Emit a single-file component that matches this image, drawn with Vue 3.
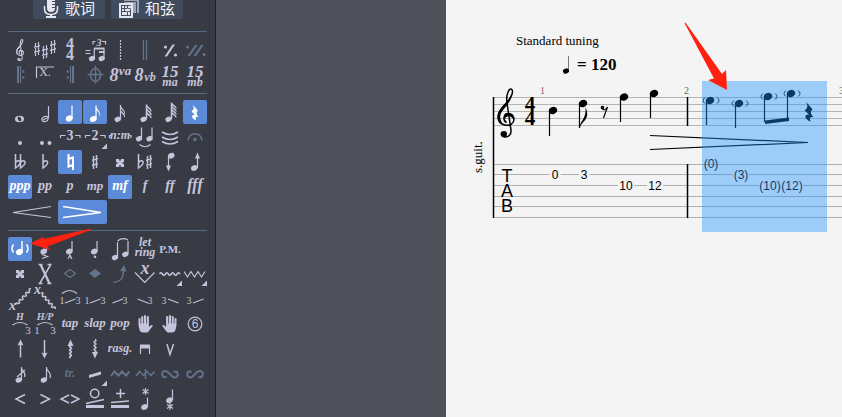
<script setup>
import { ref } from "vue";

// note head, centred on x / y
const head = (x, y, r = 3.1) => {
  const dx = r * 0.9;
  const dy = r * 0.42;
  return `M${x - dx} ${y + dy}a${r} ${r * 0.74} -25 1 1 ${dx * 2} ${-dy * 2}a${r} ${r * 0.74} -25 1 1 ${-dx * 2} ${dy * 2}z`;
};

const dot = (x, y, r = 1.5) => `M${x - r} ${y}a${r} ${r} 0 1 1 ${r * 2} 0a${r} ${r} 0 1 1 ${-r * 2} 0z`;

const sharp = (x, y) =>
  `M${x - 1.5} ${y - 6}v13M${x + 1.5} ${y - 7}v13M${x - 3} ${y - 1.6}l6 -1.8M${x - 3} ${y + 3.4}l6 -1.8`;

const flat = (x, y) => `M${x} ${y - 9}v14c3 -2 5 -4 4.6 -6c-0.6 -2 -3 -1.4 -4.6 0.4`;

// four arms, thicker towards the corners
const cross = (x, y) =>
  `M${x - 4} ${y - 4}h3l1 2.500l1 -2.500h3v3l-2.500 1l2.500 1v3h-3l-1 -2.500l-1 2.500h-3v-3l2.500 -1l-2.500 -1z`;

// wavy line between two points
const wave = (x1, y1, x2, y2, n, a) => {
  const len = Math.hypot(x2 - x1, y2 - y1);
  const px = (-(y2 - y1) / len) * a;
  const py = ((x2 - x1) / len) * a;
  let d = `M${x1} ${y1}`;
  for (let i = 0; i < n; i++) {
    const s = i % 2 ? 1 : -1;
    const mx = x1 + ((x2 - x1) * (i + 0.5)) / n + px * s;
    const my = y1 + ((y2 - y1) * (i + 0.5)) / n + py * s;
    d += `Q${mx} ${my} ${x1 + ((x2 - x1) * (i + 1)) / n} ${y1 + ((y2 - y1) * (i + 1)) / n}`;
  }
  return d;
};

const clef =
  "M9.5 34.5C5.5 32.5 6.5 25.5 11 25.5C17.5 25.5 18.5 33 14.5 36C9.500 39 1.500 36.500 1 30C0.500 24 5 20 8.500 16C12 12 15.500 8 15.500 3.500C15.500 0.500 13 0 11.500 3C9 8 9.500 12 10 15L14 42C14.500 47 11 49.500 7.500 49C4.500 48.500 3.500 46 5 44";
const clefFill =
  "M15.500 6C14 11 8 15 4 20C-1 26 0 33 6 36C3 32 2 28 5 23.500C8 19 14 14 15.500 6zM7 29.500C7.500 26 10 24.500 13 25.500C17 26.500 18.500 31 16 34.500C17 31 15 28.500 12 28.200C10 28 8.500 29 8.200 31zM4 46a3 3 0 1 1 6 0a3 3 0 1 1 -6 0z";

const quarterRest =
  "M9.500 4.500L14.800 10.500C13 12.500 13 14 15.800 17C13.500 16.200 11.500 17.500 13.500 20.500C8 18.500 7.800 14.500 12 14.800L8.500 11.500C11.500 9 11 7.500 9.500 4.500z";
const hand =
  "M5.500 13.500v-7q1 -1.200 2 0v5h.7v-7q1 -1.200 2.100 0v7h.7v-7.800q1 -1.200 2.100 0v7.800h.7v-7q1 -1.200 2.100 0v10.500l2 -1.800q1.500 -.8 2.100 .4l-4 5.400q-1 1.500 -2.500 1.500h-3.500q-2.500 0 -3.300 -2z";
const corner = "M24 18.500v5.500h-5.500z";
const turn = "M8.500 14.500C4 17.500 2 9.500 7 9C11.500 8.500 12.500 15.800 17 15.500C21.500 15 20.500 7.500 15.500 10";

// d: stroked path, f: filled path, t: texts as [x, baseline, size, string]
const groups = ref([
  [
    { name: "Clef", clef: true },
    { name: "Key signature", d: sharp(4, 11) + sharp(12, 14) + sharp(20, 9) },
    { name: "Time signature", t: [[12, 11, 16, "4"], [12, 22, 16, "4"]], face: "bold" },
    { name: "Tuplet feel", d: "M2.500 12.500h5M2.500 15.500h5M10 6.500v-3h2.500M19 3.500h3.500v3M11.300 20v-9.500M21 20v-9.500", f: head(9, 20.5) + head(18.7, 20.5) + "M11 9.500h10.500v2h-10.500zM16 13h5.500v2h-5.500z", t: [[16, 8, 10, "3"]] },
    { name: "Free barline", d: "M12.500 2v20", dashed: true },
    { name: "Double barline", d: "M10.500 2v20M13.500 2v20", dim: true },
    { name: "Simile mark", f: dot(7.5, 9, 1.6) + dot(17.5, 17, 1.6) + "M6.500 18.500l8 -12h2.500l-8 12z" },
    { name: "Double simile mark", f: dot(4.5, 9, 1.5) + dot(21, 16.5, 1.5) + "M4.500 18l7.500 -11h2.500l-7.500 11zM10.500 18l7.500 -11h2.500l-7.500 11z", dim: true },
    { name: "Repeat open", d: "M12.500 3v17", f: "M9 3h2v17h-2z" + dot(15.3, 8.5, 1.2) + dot(15.3, 14.5, 1.2), dim: true },
    { name: "Alternate ending", d: "M3.500 15v-11h17.500", t: [[12, 13, 12, "X."]], face: "plain" },
    { name: "Repeat close", d: "M12.500 3v17", f: "M14 3h2v17h-2z" + dot(9.7, 8.5, 1.2) + dot(9.7, 14.5, 1.2), dim: true },
    { name: "Coda", d: "M7.500 12a5 6.500 0 1 1 10 0a5 6.500 0 1 1 -10 0zM12.500 2.500v18M4.500 11.500h16", dim: true, semi: true },
    { name: "Ottava alta", t: [[6, 18, 18, "8"], [17, 12, 13, "va"]] },
    { name: "Ottava bassa", t: [[6, 18, 18, "8"], [17, 18, 12, "vb"]] },
    { name: "Quindicesima alta", t: [[12, 14, 17, "15"], [12, 23, 12, "ma"]] },
    { name: "Quindicesima bassa", t: [[12, 14, 17, "15"], [12, 23, 12, "mb"]] },
  ],
  [
    { name: "Whole", f: "M7 19a4.500 3.300 0 1 1 9 0a4.500 3.300 0 1 1 -9 0zM9.700 18.500a1.500 2.300 -25 1 0 3.600 1a1.500 2.300 -25 1 0 -3.600 -1z", cut: true },
    { name: "Half", d: "M15.500 18v-12" + head(12, 19, 3.1) + "M10 20l4 -2" },
    { name: "Quarter", d: "M14 18.500v-13", f: head(11.3, 18.5, 3.6), on: true },
    { name: "Eighth", d: "M13 18.500v-13", f: head(10.3, 19, 3.5) + "M13 5.500c0 4 5.500 5.500 4 12c0 -4 -2 -6.500 -4 -7.500z", on: true },
    { name: "Sixteenth", d: "M12.500 19v-14M12.500 6c0 3 5 4 4 8M12.500 10c0 3 5 4 4 7", f: head(9.7, 19.3) },
    { name: "Thirty-second", d: "M13.500 19v-14.500M13.500 5c0 2.500 5 3.500 4.500 6.500M13.500 8.500c0 2.500 5 3.500 4.500 6.500M13.500 12c0 2.500 5 3.500 4.500 6", f: head(10.5, 19.3), semi: true },
    { name: "Sixty-fourth", d: "M13.500 19v-16.500M13.500 3c0 2 5 3.500 4.500 5.500M13.500 6c0 2 5 3.500 4.500 5.500M13.500 9c0 2 5 3.500 4.500 5.500M13.500 12c0 2 5 3.500 4.500 5.500", f: head(10.5, 19.3), semi: true },
    { name: "Rest", f: quarterRest, on: true },
    { name: "Dotted", f: dot(12, 18, 2) },
    { name: "Double dotted", f: dot(9, 18, 2) + dot(16.5, 18, 2) },
    { name: "Triplet", d: "M2.500 13v-2.500h5M17 10.500h5v2.500", t: [[12, 15, 14, "3"]], face: "bold" },
    { name: "Tuplet", d: "M2.500 13v-2.500h5M17 10.500h5v2.500", f: corner, t: [[12, 15, 14, "2"]], face: "bold" },
    { name: "Custom tuplet", d: "M1.500 13v-2.500h1.500M21.500 10.500h1.500v2.500", t: [[12, 14, 12, "n:m"]] },
    { name: "Tie", d: "M8.500 13.500v-11M19 13.500v-11M6.500 19.500q5.500 4.500 11 0", f: head(6, 13.7) + head(16.5, 13.7) },
    { name: "Tie beat", d: "M4 7q8 5 16 0M4 12q8 5 16 0M4 16.500q8 5 16 0", semi: true },
    { name: "Fermata", d: "M5 15.500c1 -9 13 -9 14 0", f: dot(12, 14.5, 1.8), dim: true, semi: true },
    { name: "Double flat", d: flat(7.5, 13) + flat(12.5, 13), semi: true },
    { name: "Flat", d: flat(10, 13), semi: true },
    { name: "Natural", d: "M10.500 4v12.500l4.500 -1.500M15 20v-12.500l-4.500 1.500", on: true, bold: true },
    { name: "Sharp", d: sharp(12, 12), semi: true },
    { name: "Double sharp", f: cross(12, 13) },
    { name: "Enharmonic", d: flat(5.5, 13) + sharp(16, 12), semi: true },
    { name: "Step down", d: "M10.500 6v13", f: head(13.2, 5.7, 3.4) + "M8 15.500h5l-2.500 6z" },
    { name: "Step up", d: "M14.500 18v-13", f: head(11.3, 18, 3.4) + "M12 8.500h5l-2.500 -6z" },
    { name: "Pianississimo", t: [[12, 15, 14, "ppp"]], on: true },
    { name: "Pianissimo", t: [[12, 15, 14, "pp"]], face: "italic" },
    { name: "Piano", t: [[12, 15, 14, "p"]], face: "bolditalic" },
    { name: "Mezzo piano", t: [[12, 15, 13, "mp"]], face: "italic" },
    { name: "Mezzo forte", t: [[12, 15, 14, "mf"]], on: true },
    { name: "Forte", t: [[12, 15, 14, "f"]], face: "bolditalic" },
    { name: "Fortissimo", t: [[12, 15, 15, "ff"]], face: "bolditalic" },
    { name: "Fortississimo", t: [[12, 15, 16, "fff"]], face: "bolditalic" },
    { name: "Crescendo", d: "M43 6.500L5 12.500L43 17.500", wide: true },
    { name: "Decrescendo", d: "M5 6.500L43 12.500L5 17.500", wide: true, on: true, semi: true },
  ],
  [
    { name: "Ghost note", d: "M14 15v-11M5.500 7.500q-3 4 0 8M18.500 7.500q3 4 0 8", f: head(11.5, 15, 3.6), on: true, semi: true },
    { name: "Accent", d: "M13.500 14v-9.500M9 17.500l5.500 2l-5.500 2", f: head(10.7, 14.5, 3.4) },
    { name: "Heavy accent", d: "M14 14v-10", f: head(11.3, 14.5, 3.4) + "M9.500 22l2 -4.500h1l2 4.500h-1.500l-1.200 -2.500l-1.200 2.500z" },
    { name: "Staccato", d: "M14 14v-10", f: head(11.3, 14.5, 3.4) + dot(12, 19.7, 1.3) },
    { name: "Legato", d: "M9.500 20v-15M20 17v-13M9.500 4q5 -4 10.500 -1", f: head(7, 20.5) + head(17.3, 17.3) },
    { name: "Let ring", t: [[12, 9, 12, "let"], [12, 19, 12, "ring"]] },
    { name: "Palm mute", t: [[12, 16, 11, "P.M."]], face: "bold" },
    { name: "", gap: true },
    { name: "Dead note", f: cross(12, 12) },
    { name: "Dead slap", d: "M7 21L17.500 3M5.500 2.500h4M14.500 2.500h4M5.500 21.500h4M14.500 21.500h4", f: "M6.500 3h2.500l8.500 18h-2.500z", semi: true },
    { name: "Natural harmonic", d: "M6.500 11.500l5.500 -4l5.500 4l-5.500 4z", dim: true },
    { name: "Artificial harmonic", f: "M6 11.500l6 -4.500l6 4.500l-6 4.500z", dim: true },
    { name: "Bend", d: "M5.500 20.500c7 -1 10 -4 10 -12", f: "M12 9l4 -6l2.500 6.500z", dim: true, semi: true },
    { name: "Whammy bar", d: "M2 10.500l9.700 10l9.800 -10", t: [[12, 12, 18, "x"]] },
    { name: "Vibrato", d: wave(1.5, 12, 22, 12, 7, 2.5), f: corner, semi: true },
    { name: "Wide vibrato", d: "M1 9.500l3.500 5.500l3.500 -5.500l3.500 5.500l3.500 -5.500l3.500 5.500l3.500 -5.500", f: corner },
    { name: "Slide from below", d: wave(8, 18, 23, 2, 9, 2.5), t: [[4.5, 23, 14, "x"]], semi: true },
    { name: "Slide from above", d: wave(8, 6, 22, 22, 9, 2.5), t: [[4.5, 7, 14, "x"]], semi: true },
    { name: "Legato slide", d: "M7 16l10.500 -4M4 6.500q7.500 -6 15 0", t: [[4, 17, 10, "1"], [20, 17, 10, "3"]], face: "plain" },
    { name: "Shift slide", d: "M7 16l10.500 -4", t: [[4, 17, 10, "1"], [20, 17, 10, "3"]], face: "plain" },
    { name: "Slide in from below", d: "M4.500 16l10.500 -4", t: [[17, 17, 10, "3"]], face: "plain" },
    { name: "Slide in from above", d: "M4.500 12l10.500 4", t: [[17, 17, 10, "3"]], face: "plain" },
    { name: "Slide out downwards", d: "M10 12l10.500 4", t: [[6, 17, 10, "3"]], face: "plain" },
    { name: "Slide out upwards", d: "M10 16l10.500 -4", t: [[6, 17, 10, "3"]], face: "plain" },
    { name: "Hammer-on", d: "M4.500 13q7.500 -5 15 0", t: [[12, 8, 10, "H"], [20, 22, 11, "3"]], mixed: true },
    { name: "Hammer-on / pull-off", d: "M4.500 13q7.500 -5 15 0", t: [[12, 8, 10, "H/P"], [4, 22, 11, "1"], [20, 22, 11, "3"]], mixed: true },
    { name: "Tapping", t: [[12, 15, 13, "tap"]] },
    { name: "Slap", t: [[12, 15, 13, "slap"]] },
    { name: "Pop", t: [[12, 15, 13, "pop"]] },
    { name: "Left hand fingering", f: hand },
    { name: "Right hand fingering", f: hand, flip: true },
    { name: "String number", d: dot(12, 12, 6.8), t: [[12, 16, 12, "6"]], face: "sans" },
    { name: "Arpeggio up", d: "M12.500 20.500v-14", f: "M9.500 8.500l3 -6l3 6q-3 -1.500 -6 0z", semi: true },
    { name: "Arpeggio down", d: "M11.500 3v14", f: "M8.500 15.500l3 6l3 -6q-3 1.500 -6 0z", semi: true },
    { name: "Brush up", d: wave(12.5, 21, 12.5, 7, 8, 2), f: "M9.500 9l3 -6.500l3 6.500z", semi: true },
    { name: "Brush down", d: wave(12, 2.5, 12, 17, 8, 2), f: "M9 15l3 6.500l3 -6.500z", semi: true },
    { name: "Rasgueado", t: [[12, 15, 12, "rasg."]] },
    { name: "Downstroke", d: "M7.500 17v-8M16.500 17v-8", f: "M7 7.500h10v4h-10z" },
    { name: "Upstroke", d: "M9 7l3 10.500l3.500 -10.500", semi: true },
    { name: "", gap: true },
    { name: "Grace note before beat", d: "M13.500 18v-13M13.500 6c0 3 5 4 3 9M9 15l8 -7", f: head(10.7, 18) },
    { name: "Grace note on beat", d: "M13.500 18v-13M13.500 6c0 3 5.500 4 3.500 10", f: head(10.8, 18) },
    { name: "Trill", t: [[12, 15, 12, "tr."]], dim: true },
    { name: "Tremolo picking", f: "M6 13l12 -3.500v3l-12 3.500z" + corner },
    { name: "Upper mordent", d: "M3 14l3.500 -4.500l4 4l3.500 -4l4 4l3.500 -4", dim: true, bold: true },
    { name: "Lower mordent", d: "M3 14l3.500 -4.500l4 4l3.500 -4l4 4l3.500 -4M12.500 7v10", dim: true, semi: true },
    { name: "Turn", d: turn, dim: true, bold: true },
    { name: "Inverted turn", d: turn, dim: true, bold: true, flip: true },
    { name: "Fade in", d: "M17 7.500l-9 4.500l9 4.500", semi: true },
    { name: "Fade out", d: "M7.500 7.500l9 4.500l-9 4.500", semi: true },
    { name: "Volume swell", d: "M11 8l-8 4l8 4M13 8l8 4l-8 4", semi: true },
    { name: "Wah open", d: dot(11.7, 6.5, 4.2) + "M3 16.500l18 -4", f: "M3 18h18v3h-18z", semi: true },
    { name: "Wah close", d: "M12.500 2v9M8 6.500h9M3 15.500l18 -1.500", f: "M3 18h18v3h-18z", semi: true },
    { name: "Pick scrape", d: "M12.500 1v7M9.500 2.500l6 4M15.500 2.500l-6 4M14.500 20v-9.500", f: head(11.5, 20, 3.4) },
    { name: "Golpe", d: "M14.500 13v-10.500M12 16v7M9 17.500l6 4M15 17.500l-6 4", f: head(11.5, 13.3, 3.4) },
  ],
]);

const toggle = (cell) => {
  cell.on = !cell.on;
};

const face = (cell, i) => {
  if (cell.mixed) return i ? "plain" : "bolditalic";
  return cell.face || "bolditalic";
};

const staffLines = [97.5, 104.5, 111.5, 118.5, 125.5];
const tabLines = [164.5, 174.5, 185.5, 196.5, 206.5, 217.5];

const notes = [
  { x: 553, y: 110.5, end: 136 },
  { x: 583, y: 103.5, end: 128 },
  { x: 624, y: 97, end: 122 },
  { x: 654, y: 93.5, end: 118 },
  { x: 710, y: 100.5, end: 125, ghost: true },
  { x: 739, y: 103.5, end: 128, ghost: true },
  { x: 768, y: 96.5, end: 122, ghost: true },
  { x: 791, y: 93.5, end: 119, ghost: true },
];

const frets = [
  { x: 555, y: 179, w: 11, text: "0" },
  { x: 584, y: 179, w: 11, text: "3" },
  { x: 626, y: 190, w: 16, text: "10" },
  { x: 655, y: 190, w: 16, text: "12" },
  { x: 711, y: 168, w: 0, text: "(0)" },
  { x: 741, y: 179, w: 16, text: "(3)" },
  { x: 770, y: 190, w: 22, text: "(10)" },
  { x: 792, y: 190, w: 22, text: "(12)" },
];
</script>

<template>
  <div class="editor">
    <aside class="palette">
      <div class="tabs">
        <button type="button" class="tab">
          <svg width="16" height="19" viewBox="0 0 16 19">
            <path class="fill" d="M4 0h8v8q0 4 -4 4t-4 -4zM7 14h2v2h4v2h-10v-2h4z" />
            <path class="line semi" d="M1.500 6v3q0 5.500 6.500 5.500t6.500 -5.500v-3" />
            <path class="groove" d="M9 1.500h3M9 4.500h3M9 7.500h3" />
          </svg>
          <span>歌词</span>
        </button>
        <button type="button" class="tab chords">
          <svg width="20" height="19" viewBox="0 0 20 19">
            <path class="fill back" d="M5 0h15v13h-15z" />
            <path class="groove" d="M3 1.500h14.500v13" />
            <path class="fill" d="M0 3h14v15h-14z" />
            <path class="groove" d="M2.500 5v11M5.500 5v11M8.500 5v11M11.500 5v11M2 5.500h10M2 8.500h10M2 11.500h10M2 15.500h10" />
            <path class="fill" :d="dot(5.5, 13.5, 1.5) + dot(8.5, 10, 1.5) + dot(11.5, 7, 1.5)" />
          </svg>
          <span>和弦</span>
        </button>
      </div>

      <template v-for="(group, g) in groups" :key="g">
        <hr class="rule" />
        <div class="cells">
          <template v-for="(cell, c) in group" :key="c">
            <span v-if="cell.gap"></span>
            <button
              v-else
              type="button"
              class="cell"
              :class="{ on: cell.on, dim: cell.dim, wide: cell.wide }"
              :aria-label="cell.name"
              :aria-pressed="!!cell.on"
              @click="toggle(cell)"
            >
              <svg :width="cell.wide ? 49 : 24" height="24" :viewBox="cell.wide ? '0 0 49 24' : '0 0 24 24'">
                <g v-if="cell.clef" transform="translate(8 1) scale(0.44)">
                  <path class="line clef-line" :d="clef" />
                  <path class="fill" :d="clefFill" />
                </g>
                <g :transform="cell.flip ? 'translate(24 0) scale(-1 1)' : null">
                  <path
                    v-if="cell.d"
                    class="line"
                    :class="{ bold: cell.bold, semi: cell.semi, dashed: cell.dashed }"
                    :d="cell.d"
                  />
                  <path v-if="cell.f" class="fill" :class="{ cut: cell.cut }" :d="cell.f" />
                </g>
                <text
                  v-for="(t, i) in cell.t"
                  :key="i"
                  :class="face(cell, i)"
                  :x="t[0]"
                  :y="t[1]"
                  :font-size="t[2]"
                  text-anchor="middle"
                >{{ t[3] }}</text>
              </svg>
            </button>
          </template>
        </div>
      </template>

      <svg class="pointer" width="64" height="24" viewBox="29 226 64 24">
        <path d="M30 243.500L44.500 236.500L43.500 239L89 229Q92 229 90.500 230L47.500 246.500L50.500 250z" />
      </svg>
    </aside>

    <div class="desk"></div>

    <main class="sheet">
      <svg class="score" width="396" height="417" viewBox="446 0 396 417">
        <text class="serif" x="516" y="45" font-size="13">Standard tuning</text>
        <path class="tempo-stem" d="M568.500 71v-15" />
        <path :d="head(566, 71, 3)" />
        <text class="serif strong" x="577" y="70" font-size="17">= 120</text>

        <path v-for="y in staffLines" :key="y" class="staff" :d="`M493 ${y}h2000`" />
        <path v-for="y in tabLines" :key="y" class="tab-line" :d="`M493 ${y}h2000`" />
        <path class="bar" d="M493.500 97v121M687.500 97v29M687.500 164v54" />

        <text class="serif measure first" x="540" y="94" font-size="10">1</text>
        <text class="serif measure" x="684" y="94" font-size="10">2</text>
        <text class="serif measure" x="839" y="94" font-size="10">3</text>
        <text class="serif" transform="translate(482 173) rotate(-90)" font-size="13">s.guit.</text>

        <g transform="translate(497 88)">
          <path class="clef-line ink" :d="clef" />
          <path :d="clefFill" />
        </g>
        <text class="serif strong" x="530" y="111" font-size="21" text-anchor="middle">4</text>
        <text class="serif strong" x="530" y="125" font-size="21" text-anchor="middle">4</text>

        <g v-for="n in notes" :key="n.x">
          <path :d="head(n.x, n.y, 4.3)" />
          <path class="stem" :d="`M${n.x - 3.5} ${n.y + 1}V${n.end}`" />
          <path
            v-if="n.ghost"
            class="ghost"
            :d="`M${n.x - 5} ${n.y - 3}q-4 3 0 6M${n.x + 7} ${n.y - 3}q4 3 0 6`"
          />
        </g>
        <path d="M579.500 128c1 -8 7 -9 6 -21c4 9 0 13 -3 16q-2 2 -3 5z" />
        <path class="stem" d="M601.500 108q3 4 6 -1l-4 11" />
        <path :d="dot(602.5, 107.5, 1.8)" />
        <path d="M765 120.500l24 -3v3.500l-24 3z" />
        <path transform="translate(794 96) scale(1.250)" :d="quarterRest" />
        <path class="stem" d="M650 135.500L808 142.500L650 149.500" />

        <text class="sans" x="507" y="182" font-size="18" text-anchor="middle">T</text>
        <text class="sans" x="507" y="197" font-size="18" text-anchor="middle">A</text>
        <text class="sans" x="507" y="212" font-size="18" text-anchor="middle">B</text>

        <g v-for="f in frets" :key="f.x">
          <rect class="paper" :x="f.x - f.w / 2" :y="f.y - 10" :width="f.w" height="12" />
          <text class="sans" :x="f.x" :y="f.y" font-size="12" text-anchor="middle">{{ f.text }}</text>
        </g>

        <rect class="selection" x="702" y="81" width="125" height="151" />
        <path class="red" d="M684.500 23Q685.500 22 686.500 24L722 74L726 70L727 90L708 80L714 78.500z" />
      </svg>
    </main>
  </div>
</template>

<style>
body {
  margin: 0;
  background: #f4f4f4;
}
</style>

<style scoped>
.editor {
  display: flex;
  min-height: 100vh;
  font-family: "Liberation Sans", "Noto Sans CJK SC", sans-serif;
}

.palette {
  position: relative;
  box-sizing: border-box;
  flex: none;
  width: 216px;
  padding: 0 8px 6px;
  background: #383b44;
  border-right: 1px solid #1d2027;
}

.tabs {
  display: flex;
  gap: 6px;
  margin: 0 0 12px 25px;
}

.tab {
  display: flex;
  align-items: center;
  justify-content: center;
  gap: 6px;
  width: 72px;
  height: 19px;
  padding: 0;
  border: 0;
  border-radius: 0 0 3px 3px;
  background: #404c5d;
  color: #f4f4f8;
  font-family: "Noto Sans CJK SC", sans-serif;
  font-size: 15px;
  line-height: 16px;
}

.tab span {
  height: 19px;
}

.tab .fill {
  fill: #e6e6f0;
}

.tab .fill.back {
  fill: #9ca3b2;
}

.tab .line {
  stroke: #e6e6f0;
}

.groove {
  fill: none;
  stroke: #404c5d;
}

.rule {
  height: 1px;
  margin: 6px 0;
  border: 0;
  background: #596a80;
}

.cells {
  display: grid;
  grid-template-columns: repeat(8, 24px);
  grid-auto-rows: 24px;
  gap: 1px;
}

.cell {
  display: block;
  padding: 0;
  border: 0;
  border-radius: 2px;
  background: none;
  color: #c5c4dc;
}

.cell svg {
  display: block;
  overflow: visible;
}

.cell.wide {
  grid-column: span 2;
}

.cell.dim {
  color: #63748c;
}

.cell.on {
  background: #5b8bd8;
  color: #fff;
}

.line {
  fill: none;
  stroke: currentColor;
  stroke-width: 1.2;
}

.line.semi {
  stroke-width: 1.5;
}

.line.bold {
  stroke-width: 2;
}

.line.dashed {
  stroke-dasharray: 2 1;
}

.fill {
  fill: currentColor;
}

.fill.cut {
  fill-rule: evenodd;
}

.clef-line {
  fill: none;
  stroke-width: 1.5;
}

.cell .clef-line {
  stroke-width: 2.5;
}

.ink {
  stroke: #000;
}

.cell text {
  fill: currentColor;
  font-family: "Liberation Serif", serif;
}

.cell text.bolditalic {
  font-weight: bold;
  font-style: italic;
}

.cell text.italic {
  font-weight: bold;
  font-style: italic;
}

.cell text.bold {
  font-weight: bold;
}

.cell text.sans {
  font-family: "Liberation Sans", sans-serif;
}

.pointer {
  position: absolute;
  top: 226px;
  left: 29px;
  fill: #ff2010;
  pointer-events: none;
}

.desk {
  flex: none;
  width: 230px;
  background: #4f525b;
}

.sheet {
  flex: 1;
  min-width: 0;
  overflow: hidden;
  background: #f4f4f4;
}

.score {
  display: block;
  overflow: visible;
}

.serif {
  font-family: "Liberation Serif", serif;
}

.sans {
  font-family: "Liberation Sans", sans-serif;
}

.strong {
  font-weight: bold;
}

.staff {
  stroke: #b4b4b4;
}

.tab-line {
  stroke: #b0b0b0;
}

.bar {
  stroke: #000;
  stroke-width: 1.5;
}

.stem {
  fill: none;
  stroke: #000;
  stroke-width: 1.2;
}

.tempo-stem {
  stroke: #777;
}

.ghost {
  fill: none;
  stroke: #222;
}

.measure {
  fill: #666;
}

.measure.first {
  fill: #94606a;
}

.paper {
  fill: #f4f4f4;
}

.selection {
  fill: #1e90ff;
  fill-opacity: 0.4;
}

.red {
  fill: #ff2010;
}
</style>
